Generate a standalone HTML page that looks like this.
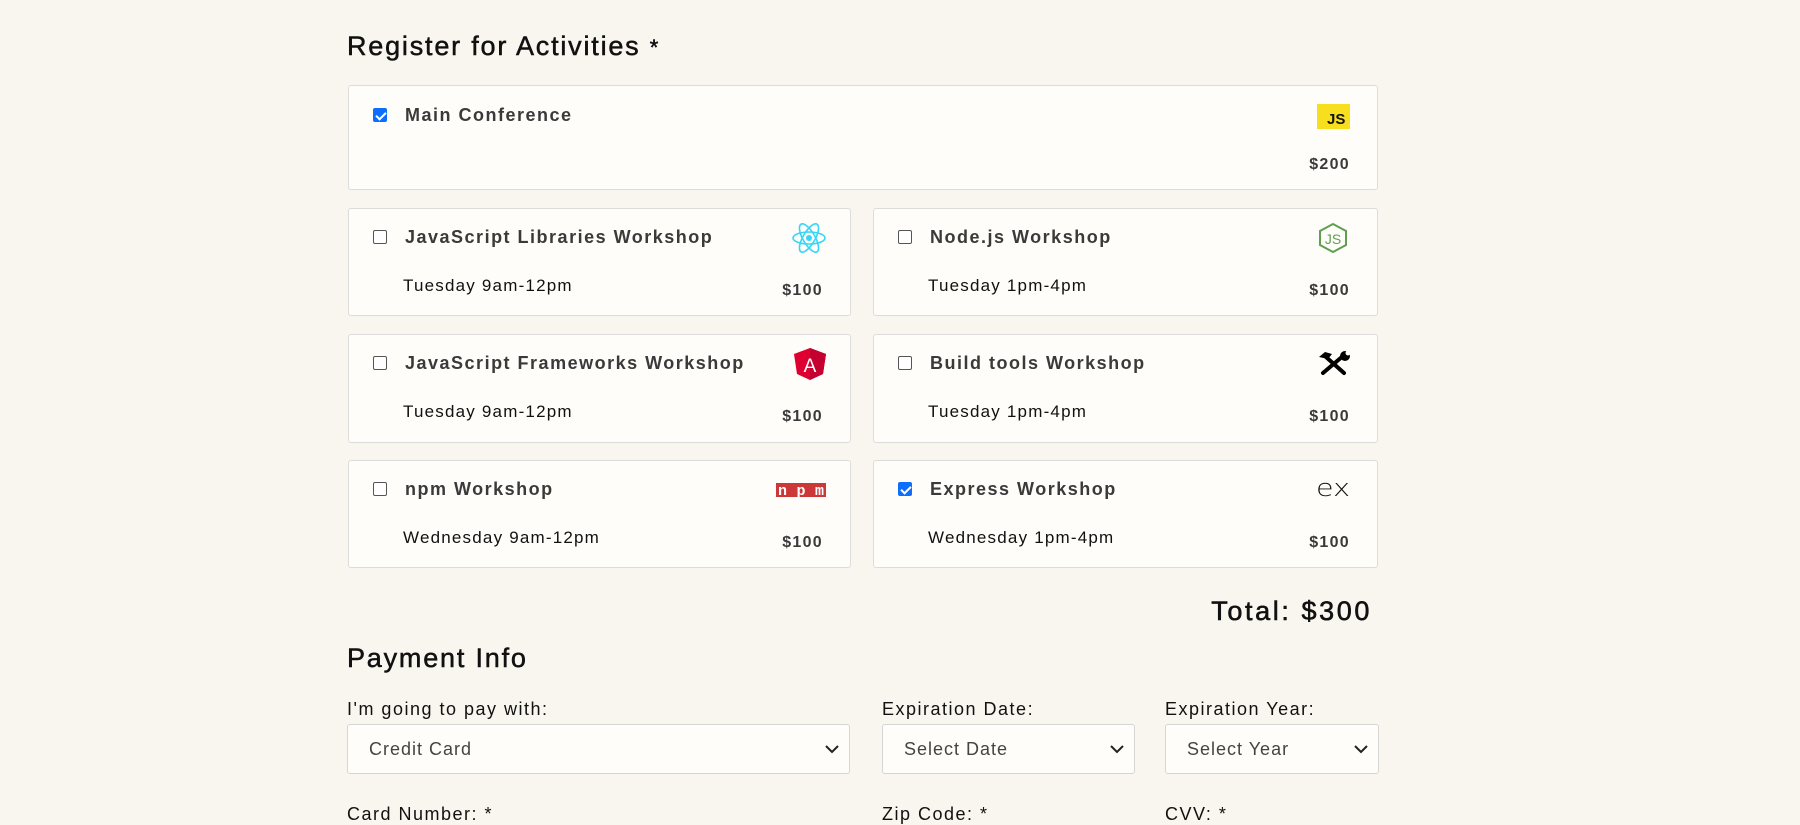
<!DOCTYPE html>
<html><head><meta charset="utf-8"><style>
*{box-sizing:border-box;margin:0;padding:0}
body{width:1800px;height:825px;background:#f9f5ef;font-family:"Liberation Sans",sans-serif;position:relative;overflow:hidden;color:#111}
.abs{position:absolute}
h2{position:absolute;font-weight:normal;font-size:27px;color:#111;left:347px;letter-spacing:1.8px;-webkit-text-stroke:0.5px #111}
.card{position:absolute;background:#fefdfa;border:1px solid #dcdcdc;border-radius:3px}
.cb{position:absolute;width:14px;height:14px;border:1.5px solid #555;border-radius:2px;background:#fff}
.cb.on{background:#0d6efd;border-color:#0d6efd}
.cb.on:after{content:"";position:absolute;left:3.5px;top:0.5px;width:4px;height:8px;border:solid #fff;border-width:0 2px 2px 0;transform:rotate(45deg)}
.t{position:absolute;font-weight:bold;font-size:18px;color:#3a3a3a;letter-spacing:1.5px}
.d{position:absolute;font-size:17px;color:#111;letter-spacing:1.2px}
.p{position:absolute;font-weight:bold;font-size:16px;color:#3a3a3a;text-align:right;letter-spacing:1.3px}
.ic{position:absolute}
.lab{position:absolute;font-size:18px;color:#111;letter-spacing:1.5px}
.sel{position:absolute;background:#fefdfa;border:1px solid #d6d6d6;border-radius:3px;height:50px;font-size:18px;color:#444;padding:14px 0 0 21px;letter-spacing:1px}
.sel svg{position:absolute;right:10px;top:20px}
</style></head><body>
<h2 style="top:31px">Register for Activities <span style="font-size:22px">*</span></h2>

<div class="card" style="left:348px;top:85px;width:1030px;height:105px">
 <div class="cb on" style="left:24px;top:22px"></div>
 <div class="t" style="left:56px;top:19px">Main Conference</div>
 <div class="ic" style="left:968px;top:18px;width:33px;height:25px;background:#f7df1e;font-weight:bold;font-size:15px;padding:7px 0 0 10px;color:#111">JS</div>
 <div class="p" style="right:27px;top:70px">$200</div>
</div>

<div class="card" style="left:348px;top:208px;width:503px;height:108px">
 <div class="cb" style="left:24px;top:21px"></div>
 <div class="t" style="left:56px;top:18px">JavaScript Libraries Workshop</div>
 <svg class="ic" style="left:442px;top:14px" width="36" height="30" viewBox="-18 -15 36 30"><g fill="none" stroke="#35d6f7" stroke-width="1.6"><ellipse rx="16" ry="6"/><ellipse rx="16" ry="6" transform="rotate(60)"/><ellipse rx="16" ry="6" transform="rotate(120)"/></g><circle r="3" fill="#35d6f7"/></svg>
 <div class="d" style="left:54px;top:67px">Tuesday 9am-12pm</div>
 <div class="p" style="right:27px;top:73px">$100</div>
</div>
<div class="card" style="left:873px;top:208px;width:505px;height:108px">
 <div class="cb" style="left:24px;top:21px"></div>
 <div class="t" style="left:56px;top:18px">Node.js Workshop</div>
 <svg class="ic" style="left:442px;top:13px" width="34" height="32" viewBox="0 0 34 32"><polygon points="17,2 30,9 30,23 17,30 4,23 4,9" fill="none" stroke="#5fa04e" stroke-width="2"/><text x="17" y="22" font-family="Liberation Sans" font-size="14" fill="#5fa04e" text-anchor="middle">JS</text></svg>
 <div class="d" style="left:54px;top:67px">Tuesday 1pm-4pm</div>
 <div class="p" style="right:27px;top:73px">$100</div>
</div>

<div class="card" style="left:348px;top:334px;width:503px;height:109px">
 <div class="cb" style="left:24px;top:21px"></div>
 <div class="t" style="left:56px;top:18px">JavaScript Frameworks Workshop</div>
 <svg class="ic" style="left:443px;top:12px" width="36" height="34" viewBox="0 0 36 34"><polygon points="18,1 34,7 31,27 18,33 5,27 2,7" fill="#dd0031"/><polygon points="18,1 34,7 31,27 18,33" fill="#c3002f"/><text x="18" y="25" font-family="Liberation Sans" font-size="19" fill="#fff" text-anchor="middle">A</text></svg>
 <div class="d" style="left:54px;top:67px">Tuesday 9am-12pm</div>
 <div class="p" style="right:27px;top:73px">$100</div>
</div>
<div class="card" style="left:873px;top:334px;width:505px;height:109px">
 <div class="cb" style="left:24px;top:21px"></div>
 <div class="t" style="left:56px;top:18px">Build tools Workshop</div>
 <svg class="ic" style="left:443px;top:16px" width="34" height="26" viewBox="0 0 34 26"><g stroke="#000" stroke-width="4" stroke-linecap="round"><path d="M6 22L26 5"/><path d="M9 6L27 22"/></g><path d="M2 6l6-5 7 2-4 5z" fill="#000"/><circle cx="28" cy="5" r="5" fill="#000"/><circle cx="31" cy="2" r="2.5" fill="#fefdfa"/></svg>
 <div class="d" style="left:54px;top:67px">Tuesday 1pm-4pm</div>
 <div class="p" style="right:27px;top:73px">$100</div>
</div>

<div class="card" style="left:348px;top:460px;width:503px;height:108px">
 <div class="cb" style="left:24px;top:21px"></div>
 <div class="t" style="left:56px;top:18px">npm Workshop</div>
 <svg class="ic" style="left:427px;top:22px" width="50" height="16" viewBox="0 0 50 16"><rect width="50" height="14" fill="#cb3837"/><text x="25" y="12" font-family="Liberation Mono" font-weight="bold" font-size="15" fill="#fff" text-anchor="middle" textLength="46">npm</text></svg>
 <div class="d" style="left:54px;top:67px">Wednesday 9am-12pm</div>
 <div class="p" style="right:27px;top:73px">$100</div>
</div>
<div class="card" style="left:873px;top:460px;width:505px;height:108px">
 <div class="cb on" style="left:24px;top:21px"></div>
 <div class="t" style="left:56px;top:18px">Express Workshop</div>
 <svg class="ic" style="left:442px;top:17px" width="36" height="22" viewBox="0 0 36 22"><text x="0" y="18" font-family="DejaVu Sans" font-weight="200" font-size="24" fill="#111" textLength="34" lengthAdjust="spacingAndGlyphs">ex</text></svg>
 <div class="d" style="left:54px;top:67px">Wednesday 1pm-4pm</div>
 <div class="p" style="right:27px;top:73px">$100</div>
</div>

<div class="abs" style="right:428px;top:596px;font-size:27px;color:#111;letter-spacing:2.6px;-webkit-text-stroke:0.6px #111">Total: $300</div>

<h2 style="top:643px">Payment Info</h2>
<div class="lab" style="left:347px;top:699px">I'm going to pay with:</div>
<div class="lab" style="left:882px;top:699px">Expiration Date:</div>
<div class="lab" style="left:1165px;top:699px">Expiration Year:</div>

<div class="sel" style="left:347px;top:724px;width:503px">Credit Card<svg width="14" height="9" viewBox="0 0 14 9"><path d="M1 1l6 6 6-6" fill="none" stroke="#222" stroke-width="2"/></svg></div>
<div class="sel" style="left:882px;top:724px;width:253px">Select Date<svg width="14" height="9" viewBox="0 0 14 9"><path d="M1 1l6 6 6-6" fill="none" stroke="#222" stroke-width="2"/></svg></div>
<div class="sel" style="left:1165px;top:724px;width:214px">Select Year<svg width="14" height="9" viewBox="0 0 14 9"><path d="M1 1l6 6 6-6" fill="none" stroke="#222" stroke-width="2"/></svg></div>

<div class="lab" style="left:347px;top:804px">Card Number: *</div>
<div class="lab" style="left:882px;top:804px">Zip Code: *</div>
<div class="lab" style="left:1165px;top:804px">CVV: *</div>
</body></html>
